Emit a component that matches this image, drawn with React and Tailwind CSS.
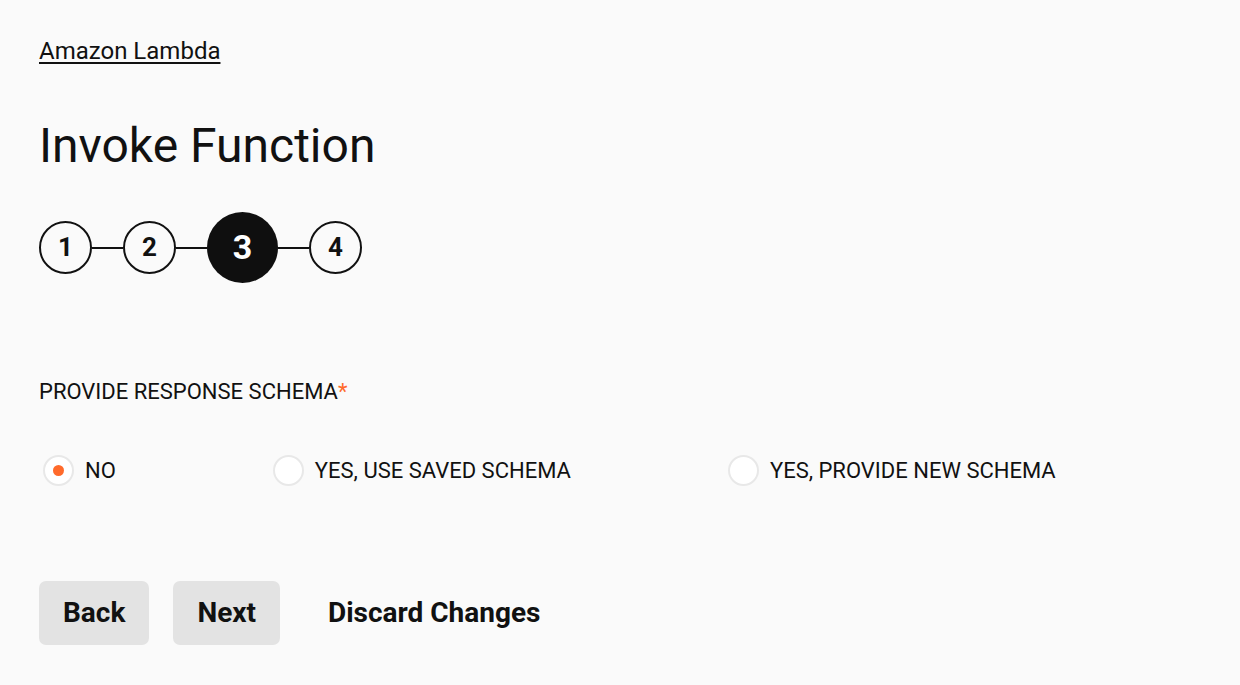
export default function App() {
  const steps = [1, 2, 3, 4];
  const current = 3;

  return (
    <div className="min-h-[685px] bg-[#fafafa] text-[#111] px-[39px] pt-[36px]" style={{ fontFamily: 'Roboto, "Noto Sans", sans-serif' }}>
      <a href="#" className="block w-fit text-[24px] leading-[30px] underline underline-offset-[3px] decoration-[1.5px]">
        Amazon Lambda
      </a>

      <h1 className="mt-[52px] text-[48px] leading-[56px] font-normal">Invoke Function</h1>

      {/* stepper */}
      <div className="mt-[38px] flex items-center">
        {steps.map((n, i) => (
          <div key={n} className="flex items-center">
            {i > 0 && <div className="w-[31px] h-[2px] bg-[#111]" />}
            {n === current ? (
              <div className="w-[71px] h-[71px] rounded-full bg-[#0f0f0f] text-white flex items-center justify-center text-[34px] font-bold">
                {n}
              </div>
            ) : (
              <div className="w-[53px] h-[53px] rounded-full border-2 border-[#111] flex items-center justify-center text-[26px] font-bold">
                {n}
              </div>
            )}
          </div>
        ))}
      </div>

      <div className="mt-[96px] text-[22px] leading-[26px] uppercase">
        Provide Response Schema<span className="text-[#ff6a2b]">*</span>
      </div>

      {/* radios */}
      <div className="mt-[49px] flex items-center pl-[4px] gap-[157px]">
        {['No', 'Yes, use saved schema', 'Yes, provide new schema'].map((label, i) => (
          <label key={label} className="flex items-center gap-[11px] text-[22px] uppercase">
            <span className="w-[31px] h-[31px] rounded-full border-2 border-[#e8e8e8] bg-white flex items-center justify-center">
              {i === 0 && <span className="w-[11px] h-[11px] rounded-full bg-[#ff6a2b]" />}
            </span>
            {label}
          </label>
        ))}
      </div>

      {/* actions */}
      <div className="mt-[94px] flex items-center gap-[24px]">
        <button className="h-[64px] px-[24px] rounded-[7px] bg-[#e3e3e3] text-[28px] font-bold">Back</button>
        <button className="h-[64px] px-[24px] rounded-[7px] bg-[#e3e3e3] text-[28px] font-bold">Next</button>
        <button className="h-[64px] px-[24px] text-[28px] font-bold">Discard Changes</button>
      </div>
    </div>
  );
}
